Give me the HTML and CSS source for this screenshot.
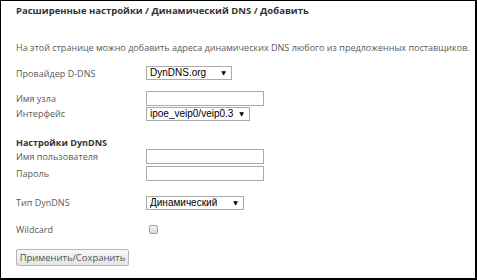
FILE: index.html
```html
<!DOCTYPE html>
<html lang="ru">
<head>
<meta charset="utf-8">
<link rel="stylesheet" href="styles.css">
</head>
<body>
<div class="frame">
  <div class="title">Расширенные настройки / Динамический DNS / Добавить</div>
  <div class="desc">На этой странице можно добавить адреса динамических DNS любого из предложенных поставщиков.</div>

  <div class="row r-provider">
    <span class="label">Провайдер D-DNS</span>
    <span class="sel w-provider"><select><option>DynDNS.org</option></select><span class="arrow">▼</span></span>
  </div>

  <div class="row r-host">
    <span class="label">Имя узла</span>
    <input class="txt" type="text">
  </div>
  <div class="row r-iface">
    <span class="label">Интерфейс</span>
    <span class="sel w-iface"><select><option>ipoe_veip0/veip0.3</option></select><span class="arrow">▼</span></span>
  </div>

  <div class="section">Настройки DynDNS</div>
  <div class="row r-user">
    <span class="label">Имя пользователя</span>
    <input class="txt" type="text">
  </div>
  <div class="row r-pass">
    <span class="label">Пароль</span>
    <input class="txt" type="password">
  </div>

  <div class="row r-type">
    <span class="label">Тип DynDNS</span>
    <span class="sel w-type"><select><option>Динамический</option></select><span class="arrow">▼</span></span>
  </div>

  <div class="row r-wild">
    <span class="label">Wildcard</span>
    <input class="chk" type="checkbox">
  </div>

  <div class="actions">
    <button class="btn" type="button">Применить/Сохранить</button>
  </div>
</div>
</body>
</html>
```
FILE: styles.css
```css
html, body {
  margin: 0;
  padding: 0;
  background: #fff;
}
.frame {
  box-sizing: border-box;
  width: 477px;
  height: 280px;
  border-top: 1px solid #000;
  border-left: 1px solid #000;
  border-right: 2px solid #000;
  border-bottom: 2px solid #000;
  padding-left: 15px;
  font-family: "Open Sans", sans-serif;
  font-size: 9px;
  letter-spacing: 0.02px;
  color: #5a5a5a;
  overflow: hidden;
  white-space: nowrap;
}
.title {
  height: 20px;
  line-height: 20px;
  font-weight: bold;
  font-size: 9.5px;
  letter-spacing: 0;
  color: #333;
}
.desc {
  margin-top: 17px;
  height: 20px;
  line-height: 20px;
}
.row {
  display: flex;
  align-items: center;
  height: 15px;
}
.label {
  width: 130px;
  flex: none;
}
.r-provider { margin-top: 7px; height: 16px; }
.r-host { margin-top: 10px; }
.r-iface { margin-top: 0; }
.section {
  margin-top: 16px;
  height: 12px;
  line-height: 12px;
  font-weight: bold;
  color: #333;
}
.r-user { margin-top: 0; }
.r-pass { margin-top: 1px; height: 16px; }
.r-type { margin-top: 14px; }
.r-wild { margin-top: 11px; height: 16px; }
.actions { margin-top: 12px; }

.txt {
  box-sizing: border-box;
  width: 118px;
  height: 15px;
  margin: 0;
  padding: 0 2px;
  border: 1px solid #aaa;
  background: #fff;
}
.sel {
  position: relative;
  display: inline-block;
  height: 14px;
}
.sel select {
  appearance: none;
  -webkit-appearance: none;
  box-sizing: border-box;
  width: 100%;
  height: 14px;
  margin: 0;
  padding: 0 0 0 3px;
  border: 1px solid #aaa;
  border-radius: 0;
  background: #fff;
  font-family: "Liberation Sans", Arial, sans-serif;
  font-size: 10px;
  letter-spacing: 0;
  line-height: 12px;
  color: #000;
}
.sel .arrow {
  position: absolute;
  right: 6px;
  top: 2px;
  font-size: 6px;
  line-height: 10px;
  color: #000;
  font-family: "DejaVu Sans", sans-serif;
  pointer-events: none;
}
.w-provider { width: 86px; }
.w-iface { width: 104px; }
.w-type { width: 98px; }

.chk {
  appearance: none;
  -webkit-appearance: none;
  box-sizing: border-box;
  width: 9px;
  height: 9px;
  margin: 0 0 0 3px;
  border: 1px solid #a0a0a0;
  border-radius: 2px;
  background: linear-gradient(#f4f4f4, #dcdcdc);
}
.btn {
  box-sizing: border-box;
  height: 17px;
  width: 113px;
  margin: 0;
  padding: 0;
  border: 1px solid #b5b5b5;
  border-radius: 2px;
  background: linear-gradient(#f8f8f8, #e4e4e4);
  font-family: "Open Sans", sans-serif;
  font-size: 9.5px;
  letter-spacing: -0.05px;
  line-height: 14px;
  color: #555;
  white-space: nowrap;
}
```
